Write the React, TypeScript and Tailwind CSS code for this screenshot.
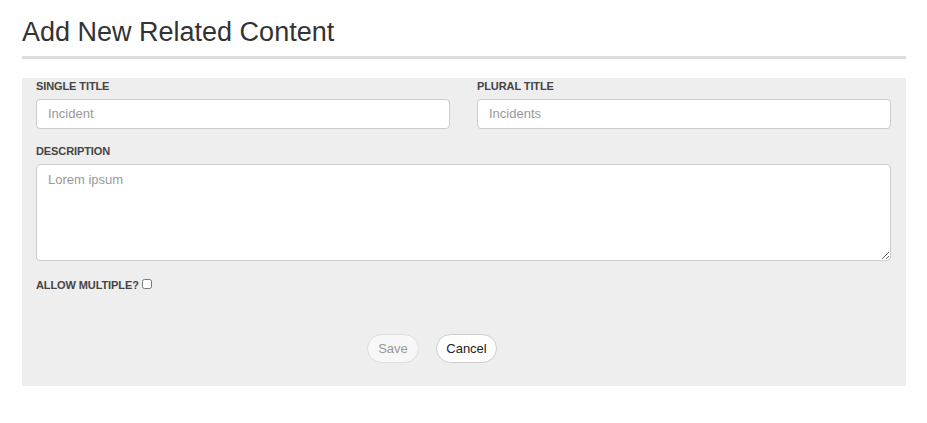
import React from "react";

const labelCls = "block text-[11px] font-bold uppercase text-[#444] leading-[13px] mb-[6px] tracking-[-0.1px]";
const inputCls =
    "w-full h-[30px] rounded-[4px] border border-[#ccc] bg-white px-[11px] pb-[1px] text-[13px] text-[#555] placeholder:text-[#999] outline-none";

export default function App() {
    return (
        <div className="min-h-screen bg-white pl-[22px] pr-[21px] pt-[14px]" style={{ fontFamily: "'Liberation Sans', Arial, sans-serif" }}>
            <h2 className="text-[27px] leading-[36px] text-[#333] font-normal pb-[6px] border-b-[3px] border-[#ddd]">
                Add New Related Content
            </h2>

            <div className="mt-[19px] bg-[#eee] h-[308px] pl-[14px] pr-[15px] pt-[2px]">
                <div className="grid grid-cols-2 gap-[27px]">
                    <div>
                        <label className={labelCls}>Single Title</label>
                        <input className={inputCls} placeholder="Incident" />
                    </div>
                    <div>
                        <label className={labelCls}>Plural Title</label>
                        <input className={inputCls} placeholder="Incidents" />
                    </div>
                </div>

                <div className="mt-[16px]">
                    <label className={labelCls}>Description</label>
                    <textarea
                        className="block w-full h-[97px] rounded-[4px] border border-[#ccc] bg-white px-[11px] py-[5px] text-[13px] leading-[20px] text-[#555] placeholder:text-[#999] outline-none"
                        placeholder="Lorem ipsum"
                    />
                </div>

                <div className="mt-[18px] flex items-center">
                    <span className="text-[11px] font-bold uppercase text-[#444] leading-[13px] tracking-[-0.1px]">Allow Multiple?</span>
                    <input type="checkbox" className="ml-[3px] w-[10px] h-[10px] -mt-[4px] accent-[#777]" />
                </div>

                <div className="mt-[42px] flex gap-[17px] pl-[331px]">
                    <button className="h-[29px] w-[52px] rounded-full border border-[#ddd] bg-[#f7f7f7] text-[13px] text-[#999]">
                        Save
                    </button>
                    <button className="h-[29px] w-[61px] rounded-full border border-[#ccc] bg-white text-[13px] text-[#222]">
                        Cancel
                    </button>
                </div>
            </div>
        </div>
    );
}
